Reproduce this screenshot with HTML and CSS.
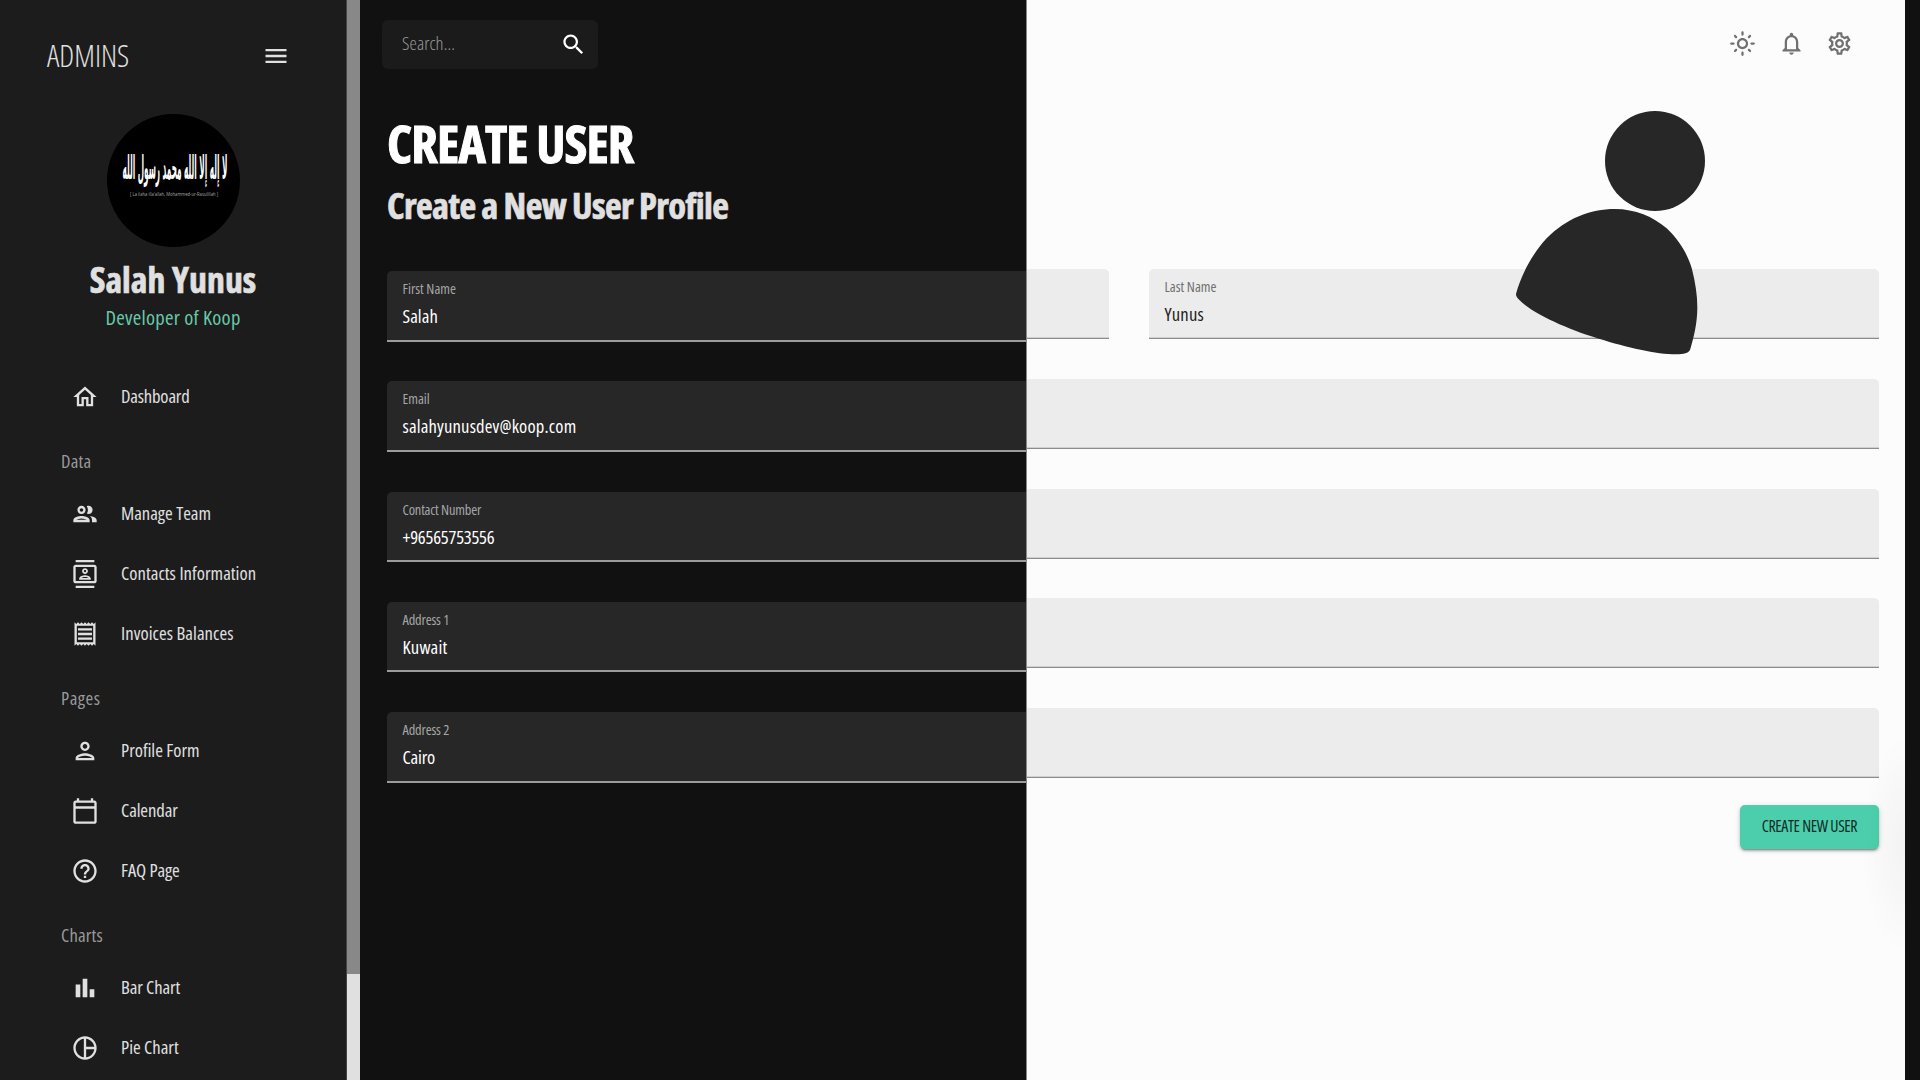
FILE: index.html
```html
<!DOCTYPE html>
<html lang="en">
<head>
<meta charset="utf-8">
<title>Create User</title>
<link rel="stylesheet" href="styles.css">
</head>
<body>
<div class="app">
  <aside class="sidebar">
    <header class="brand">
      <span class="brand-name">ADMINS</span>
      <svg class="icon" viewBox="0 0 24 24"><path d="M3 18h18v-2H3v2zm0-5h18v-2H3v2zm0-7v2h18V6H3z"/></svg>
    </header>
    <section class="profile">
      <svg class="avatar" viewBox="0 0 133 133">
        <circle cx="66.500" cy="66.500" r="66.500" fill="#000"/>
        <text class="script" transform="translate(68 65) scale(1 2.7)" text-anchor="middle" textLength="105" lengthAdjust="spacingAndGlyphs">لا إله إلا الله محمد رسول الله</text>
        <text class="translit" x="67" y="82" text-anchor="middle" textLength="88" lengthAdjust="spacingAndGlyphs">[ La ilaha illa'allah, Mohammed-ur-Rasulillah ]</text>
      </svg>
      <h2 class="profile-name">Salah Yunus</h2>
      <p class="profile-role">Developer of Koop</p>
    </section>
    <nav class="menu">
      <a class="item tight"><svg class="icon" viewBox="0 0 24 24"><path d="m12 5.690 5 4.500V18h-2v-6H9v6H7v-7.810l5-4.500M12 3 2 12h3v8h6v-6h2v6h6v-8h3L12 3z"/></svg><span>Dashboard</span></a>
      <h3 class="group">Data</h3>
      <a class="item"><svg class="icon" viewBox="0 0 24 24"><path d="M9 13.750c-2.340 0-7 1.170-7 3.500V19h14v-1.750c0-2.330-4.660-3.500-7-3.500zM4.340 17c.84-.58 2.870-1.250 4.660-1.250s3.820.67 4.660 1.250H4.340zM9 12c1.930 0 3.500-1.570 3.500-3.500S10.930 5 9 5 5.500 6.570 5.500 8.500 7.070 12 9 12zm0-5c.83 0 1.500.67 1.500 1.500S9.830 10 9 10s-1.500-.67-1.500-1.500S8.170 7 9 7zm7.040 6.810c1.160.84 1.960 1.960 1.960 3.440V19h4v-1.750c0-2.020-3.500-3.170-5.960-3.440zM15 12c1.930 0 3.500-1.570 3.500-3.500S16.930 5 15 5c-.54 0-1.040.13-1.500.35.63.89 1 1.980 1 3.150s-.37 2.260-1 3.150c.46.22.96.35 1.500.35z"/></svg><span>Manage Team</span></a>
      <a class="item loose-s"><svg class="icon" viewBox="0 0 24 24"><path d="M20 4H4c-1.100 0-2 .9-2 2v12c0 1.100.9 2 2 2h16c1.100 0 2-.9 2-2V6c0-1.100-.9-2-2-2zm0 14H4V6h16v12zM4 0h16v2H4zm0 22h16v2H4zm8-10c1.380 0 2.500-1.120 2.500-2.500S13.380 7 12 7 9.500 8.120 9.500 9.500 10.620 12 12 12zm0-3.500c.55 0 1 .45 1 1s-.45 1-1 1-1-.45-1-1 .45-1 1-1zm5 7.490C17 13.900 13.690 13 12 13s-5 .9-5 2.990V17h10v-1.010zm-8.190-.49c.61-.52 2.030-1 3.190-1 1.170 0 2.590.48 3.200 1H8.810z"/></svg><span>Contacts Information</span></a>
      <a class="item loose-s"><svg class="icon" viewBox="0 0 24 24"><path d="M19.500 3.500 18 2l-1.500 1.500L15 2l-1.500 1.500L12 2l-1.500 1.500L9 2 7.500 3.500 6 2 4.500 3.500 3 2v20l1.500-1.500L6 22l1.500-1.500L9 22l1.500-1.500L12 22l1.500-1.500L15 22l1.500-1.500L18 22l1.500-1.500L21 22V2l-1.500 1.500zM19 19.090H5V4.910h14v14.180zM6 15h12v2H6zm0-4h12v2H6zm0-4h12v2H6z"/></svg><span>Invoices Balances</span></a>
      <h3 class="group wide">Pages</h3>
      <a class="item"><svg class="icon" viewBox="0 0 24 24"><path d="M12 6c1.100 0 2 .9 2 2s-.9 2-2 2-2-.9-2-2 .9-2 2-2m0 10c2.700 0 5.800 1.290 6 2H6c.23-.72 3.310-2 6-2m0-12C9.790 4 8 5.790 8 8s1.790 4 4 4 4-1.790 4-4-1.790-4-4-4zm0 10c-2.670 0-8 1.340-8 4v2h16v-2c0-2.660-5.330-4-8-4z"/></svg><span>Profile Form</span></a>
      <a class="item tight-s"><svg class="icon" viewBox="0 0 24 24"><path d="M20 3h-1V1h-2v2H7V1H5v2H4c-1.100 0-2 .9-2 2v16c0 1.100.9 2 2 2h16c1.100 0 2-.9 2-2V5c0-1.100-.9-2-2-2zm0 18H4V10h16v11zm0-13H4V5h16v3z"/></svg><span>Calendar</span></a>
      <a class="item tight-s"><svg class="icon" viewBox="0 0 24 24"><path d="M11 18h2v-2h-2v2zm1-16C6.480 2 2 6.480 2 12s4.480 10 10 10 10-4.480 10-10S17.520 2 12 2zm0 18c-4.410 0-8-3.590-8-8s3.590-8 8-8 8 3.590 8 8-3.590 8-8 8zm0-14c-2.210 0-4 1.790-4 4h2c0-1.100.9-2 2-2s2 .9 2 2c0 2-3 1.750-3 5h2c0-2.250 3-2.500 3-5 0-2.210-1.790-4-4-4z"/></svg><span>FAQ Page</span></a>
      <h3 class="group">Charts</h3>
      <a class="item tight-s"><svg class="icon" viewBox="0 0 24 24"><path d="M4 9h4v11H4zm12 4h4v7h-4zm-6-9h4v16h-4z"/></svg><span>Bar Chart</span></a>
      <a class="item"><svg class="icon" viewBox="0 0 24 24"><path d="M12 2C6.480 2 2 6.480 2 12s4.480 10 10 10 10-4.480 10-10S17.520 2 12 2zm1 2.070c3.610.45 6.480 3.330 6.930 6.930H13V4.070zM4 12c0-4.060 3.070-7.440 7-7.930v15.870c-3.930-.5-7-3.880-7-7.940zm9 7.930V13h6.930c-.45 3.610-3.320 6.480-6.930 6.930z"/></svg><span>Pie Chart</span></a>
    </nav>
  </aside>
  <div class="scrollbar"><div class="thumb"></div></div>

  <main class="pane dark">
    <div class="topbar">
      <div class="search"><span>Search...</span><svg class="icon" viewBox="0 0 24 24"><path d="M15.500 14h-.79l-.28-.27C15.410 12.590 16 11.110 16 9.500 16 5.910 13.090 3 9.500 3S3 5.910 3 9.500 5.910 16 9.500 16c1.610 0 3.090-.59 4.230-1.570l.27.28v.79l5 4.990L20.490 19l-4.990-5zm-6 0C7.010 14 5 11.990 5 9.500S7.010 5 9.500 5 14 7.010 14 9.500 11.990 14 9.500 14z"/></svg></div>
    </div>
    <h1 class="title">CREATE USER</h1>
    <h2 class="subtitle">Create a New User Profile</h2>
    <form class="fields">
      <div class="field"><label>First Name</label><span class="value loose-s">Salah</span></div>
      <div class="field"><label>Email</label><span class="value loose">salahyunusdev@koop.com</span></div>
      <div class="field"><label class="tight">Contact Number</label><span class="value tighter">+96565753556</span></div>
      <div class="field"><label class="tight">Address 1</label><span class="value loose">Kuwait</span></div>
      <div class="field"><label class="tight">Address 2</label><span class="value tight">Cairo</span></div>
    </form>
  </main>

  <main class="pane light">
    <div class="topbar">
      <svg class="icon" viewBox="0 0 24 24"><path d="M12 9c1.650 0 3 1.350 3 3s-1.350 3-3 3-3-1.350-3-3 1.350-3 3-3m0-2c-2.760 0-5 2.240-5 5s2.240 5 5 5 5-2.240 5-5-2.240-5-5-5zM2 13h2c.55 0 1-.45 1-1s-.45-1-1-1H2c-.55 0-1 .45-1 1s.45 1 1 1zm18 0h2c.55 0 1-.45 1-1s-.45-1-1-1h-2c-.55 0-1 .45-1 1s.45 1 1 1zM11 2v2c0 .55.45 1 1 1s1-.45 1-1V2c0-.55-.45-1-1-1s-1 .45-1 1zm0 18v2c0 .55.45 1 1 1s1-.45 1-1v-2c0-.55-.45-1-1-1s-1 .45-1 1zM5.990 4.580c-.39-.39-1.030-.39-1.410 0-.39.39-.39 1.030 0 1.410l1.060 1.060c.39.39 1.030.39 1.410 0s.39-1.030 0-1.410L5.990 4.580zm12.370 12.370c-.39-.39-1.030-.39-1.410 0-.39.39-.39 1.030 0 1.410l1.060 1.060c.39.39 1.030.39 1.410 0 .39-.39.39-1.030 0-1.410l-1.060-1.060zm1.060-10.960c.39-.39.39-1.030 0-1.410-.39-.39-1.030-.39-1.410 0l-1.060 1.060c-.39.39-.39 1.030 0 1.410s1.030.39 1.410 0l1.060-1.060zM7.050 18.360c.39-.39.39-1.030 0-1.410-.39-.39-1.030-.39-1.410 0l-1.060 1.060c-.39.39-.39 1.030 0 1.410s1.030.39 1.410 0l1.060-1.060z"/></svg>
      <svg class="icon" viewBox="0 0 24 24"><path d="M12 22c1.100 0 2-.9 2-2h-4c0 1.100.9 2 2 2zm6-6v-5c0-3.070-1.630-5.640-4.500-6.320V4c0-.83-.67-1.500-1.500-1.500s-1.500.67-1.500 1.500v.68C7.640 5.360 6 7.920 6 11v5l-2 2v1h16v-1l-2-2zm-2 1H8v-6c0-2.480 1.510-4.500 4-4.500s4 2.020 4 4.500v6z"/></svg>
      <svg class="icon" viewBox="0 0 24 24"><path d="M19.430 12.980c.04-.32.07-.64.07-.98 0-.34-.03-.66-.07-.98l2.110-1.650c.19-.15.24-.42.12-.64l-2-3.460c-.09-.16-.26-.25-.44-.25-.06 0-.12.010-.17.030l-2.490 1c-.52-.4-1.080-.73-1.690-.98l-.38-2.650C14.460 2.180 14.250 2 14 2h-4c-.25 0-.46.18-.49.42l-.38 2.650c-.61.25-1.170.59-1.690.98l-2.490-1c-.06-.02-.12-.03-.18-.03-.17 0-.34.09-.43.25l-2 3.460c-.13.22-.07.49.12.64l2.110 1.650c-.04.32-.07.65-.07.98 0 .33.030.66.070.98l-2.110 1.650c-.19.15-.24.42-.12.64l2 3.460c.09.16.26.25.44.25.06 0 .12-.01.17-.03l2.490-1c.52.4 1.080.73 1.690.98l.38 2.650c.03.24.24.42.49.42h4c.25 0 .46-.18.49-.42l.38-2.650c.61-.25 1.170-.59 1.690-.98l2.490 1c.06.02.12.03.18.03.17 0 .34-.09.43-.25l2-3.460c.12-.22.07-.49-.12-.64l-2.110-1.650zm-1.980-1.710c.04.31.05.52.05.73 0 .21-.02.43-.05.73l-.14 1.130.89.7 1.080.84-.7 1.210-1.270-.51-1.040-.42-.9.68c-.43.32-.84.56-1.250.73l-1.060.43-.16 1.130-.2 1.350h-1.400l-.19-1.350-.16-1.130-1.060-.43c-.43-.18-.83-.41-1.230-.71l-.91-.7-1.060.43-1.270.51-.7-1.210 1.080-.84.89-.7-.14-1.130c-.03-.31-.05-.54-.05-.74s.02-.43.05-.73l.14-1.130-.89-.7-1.080-.84.7-1.210 1.270.51 1.040.42.9-.68c.43-.32.84-.56 1.250-.73l1.060-.43.16-1.130.2-1.350h1.390l.19 1.350.16 1.130 1.060.43c.43.18.83.41 1.230.71l.91.7 1.060-.43 1.270-.51.7 1.210-1.070.85-.89.7.14 1.130zM12 8c-2.210 0-4 1.790-4 4s1.790 4 4 4 4-1.790 4-4-1.790-4-4-4zm0 6c-1.100 0-2-.9-2-2s.9-2 2-2 2 .9 2 2-.9 2-2 2z"/></svg>
    </div>
    <form class="fields">
      <div class="pair">
        <div class="field stub"></div>
        <div class="field"><label>Last Name</label><span class="value loose">Yunus</span></div>
      </div>
      <div class="field stub"></div>
      <div class="field stub"></div>
      <div class="field stub"></div>
      <div class="field stub"></div>
      <button class="submit" type="button">CREATE NEW USER</button>
    </form>
    <svg class="person" viewBox="0 0 1320 1140">
      <circle cx="525" cy="483" r="150"/>
      <path d="M108 882C122 830 150 770 200 715C260 655 330 627 405 627C465 627 520 650 560 685C600 722 625 768 636 808C646 848 652 885 652 922C652 970 641 1015 630 1050C625 1059 612 1063 588 1063C530 1063 440 1042 357 1016C280 993 160 945 116 898C111 892 108 888 108 882Z"/>
    </svg>
  </main>
  <div class="edge"></div>
</div>
</body>
</html>
```

FILE: styles.css
```css
* { box-sizing: border-box; margin: 0; padding: 0; }

body {
  width: 1920px;
  height: 1080px;
  overflow: hidden;
  background: #111;
  font-family: "Open Sans", sans-serif;
  font-stretch: 75%;
}

.app {
  display: grid;
  grid-template-columns: 346px 14px 666px 879px 15px;
  height: 1080px;
}

.icon { width: 28px; height: 28px; fill: currentColor; flex: none; }

.tighter { letter-spacing: -0.25px; }
.tight { letter-spacing: -0.18px; }
.tight-s { letter-spacing: -0.1px; }
.loose-s { letter-spacing: 0.05px; }
.loose { letter-spacing: 0.17px; }

/* Sidebar */
.sidebar { background: #1c1c1c; color: #e0e0e0; height: 1080px; overflow: hidden; }

.brand {
  display: flex;
  align-items: center;
  justify-content: space-between;
  height: 114px;
  padding: 0 56px 2px 47px;
}
.brand-name { font-size: 30.500px; font-weight: 330; line-height: 40px; padding-bottom: 3px; }

.profile { display: flex; flex-direction: column; align-items: center; height: 252px; }
.avatar { width: 133px; height: 133px; display: block; overflow: visible; }
.script { fill: #fff; font-family: "DejaVu Sans", sans-serif; font-size: 12px; font-weight: 700; font-stretch: 100%; }
.translit { fill: #aaa; font-size: 4.500px; font-stretch: 100%; }
.profile-name {
  margin-top: 10px;
  font-size: 35.700px;
  font-weight: 700;
  line-height: 44px;
  letter-spacing: 0.1px;
  -webkit-text-stroke: 0.7px currentColor;
}
.profile-role { font-size: 20.600px; line-height: 30px; margin-top: 1px; color: #68c9a9; letter-spacing: 0.25px; }

.item {
  display: flex;
  align-items: center;
  gap: 22px;
  height: 60px;
  padding-left: 71px;
  font-size: 18.600px;
  white-space: nowrap;
}
.item .icon { position: relative; top: 1px; }
.item span { padding-bottom: 2px; }
.group {
  height: 57px;
  padding: 13px 0 0 61px;
  font-size: 18.600px;
  font-weight: 400;
  line-height: 43px;
  letter-spacing: 0.2px;
  color: #999;
}
.wide { letter-spacing: 0.5px; }

.scrollbar { background: #e0e0e0; border-left: 1px solid #444; }
.thumb { height: 974px; background: #888; }

/* Content panes */
.pane { height: 1080px; }
.dark { background: #111; color: #fff; padding: 20px 0 0 27px; }
.light { position: relative; background: #fcfcfc; padding: 20px 26px 0 0; border-left: 1px solid #888; }
.light::after {
  content: "";
  position: absolute;
  right: 0;
  top: 735px;
  width: 44px;
  height: 220px;
  background: radial-gradient(ellipse 44px 110px at 100% 50%, rgba(0,0,0,.04), rgba(0,0,0,.015) 60%, transparent);
}
.edge { background: #111; }

.topbar { display: flex; height: 49px; align-items: center; }
.search {
  display: flex;
  align-items: center;
  justify-content: space-between;
  width: 216px;
  height: 49px;
  margin-left: -5px;
  padding: 0 11px 0 20px;
  border-radius: 6px;
  background: #1b1b1b;
  font-size: 18.600px;
  font-weight: 300;
  letter-spacing: 0.1px;
}
.search span { color: #999; padding-bottom: 4px; }
.search .icon { width: 27px; height: 27px; margin-bottom: 1px; }
.light .topbar { justify-content: flex-end; gap: 21.500px; padding: 0 26px 2px 0; color: #717171; }
.light .topbar .icon { width: 27px; height: 27px; }

.title {
  margin-top: 42px;
  font-size: 52px;
  font-weight: 700;
  line-height: 64px;
  letter-spacing: -0.850px;
  -webkit-text-stroke: 1px currentColor;
}
.subtitle {
  font-size: 36.500px;
  font-weight: 700;
  line-height: 60px;
  letter-spacing: -0.620px;
  color: #e0e0e0;
  -webkit-text-stroke: 0.700px currentColor;
}

.fields { display: flex; flex-direction: column; }
.dark .fields { gap: 39.750px; margin-top: 36px; }
.light .fields { gap: 39.800px; margin-top: 200px; }

.field {
  display: flex;
  flex-direction: column;
  height: 70.500px;
  padding: 8px 15.500px 0;
  background: #272727;
  border-bottom: 2px solid #9c9c9c;
}
.dark .field { border-top-left-radius: 5px; }
.field label { font-size: 14.400px; line-height: 20px; color: #a5a5a5; }
.value { margin-top: 5px; font-size: 18.600px; line-height: 24px; }

.light .field {
  height: 70px;
  background: #ececec;
  border-bottom: 1px solid #8c8c8c;
  box-shadow: inset 0 -1px #d0d0d0;
  border-top-right-radius: 5px;
}
.light .field label { color: #707070; }
.light .value { color: #222; }
.pair { display: grid; grid-template-columns: 82px 730px; gap: 40px; }
.pair .field:last-child { border-top-left-radius: 5px; }

.submit {
  align-self: flex-end;
  width: 139px;
  height: 44px;
  margin-top: -13px;
  padding-bottom: 2px;
  border: 0;
  border-radius: 5px;
  background: #4cceac;
  color: #0f2b24;
  font: 500 15.900px "Open Sans", sans-serif;
  font-stretch: 75%;
  letter-spacing: -0.350px;
  box-shadow: 0 3px 2px -2px rgba(0,0,0,.3), 0 2px 3px rgba(0,0,0,.2), 0 1px 6px rgba(0,0,0,.12);
}

/* Illustration floats above the form */
.person { position: absolute; left: 453px; top: 0; width: 440px; height: 380px; fill: #272727; }
```
